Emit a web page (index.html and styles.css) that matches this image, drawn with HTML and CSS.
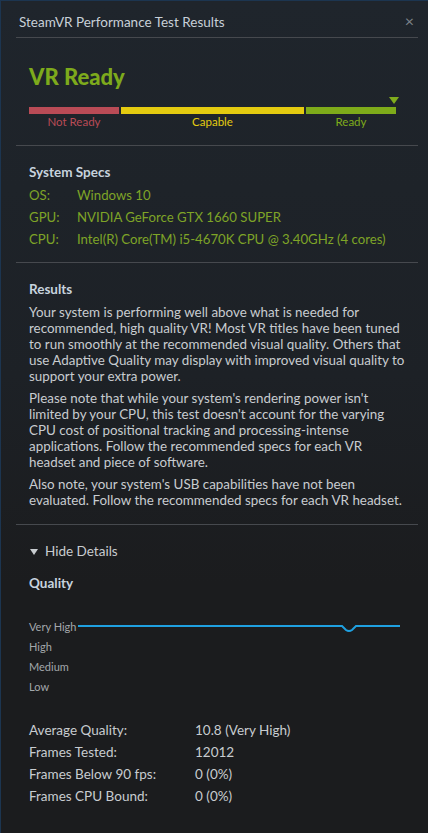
FILE: index.html
```html
<!DOCTYPE html>
<html>
<head>
<meta charset="utf-8">
<link rel="stylesheet" href="styles.css">
</head>
<body>
<div class="window">
  <div class="titlebar">
    <span class="title">SteamVR Performance Test Results</span>
    <span class="close">×</span>
  </div>
  <div class="content">
    <section class="status">
      <h1 class="verdict">VR Ready</h1>
      <div class="meter">
        <div class="marker-row"><span class="marker"></span></div>
        <div class="bars">
          <div class="seg seg-red"><div class="bar"></div><span>Not Ready</span></div>
          <div class="seg seg-yellow"><div class="bar"></div><span>Capable</span></div>
          <div class="seg seg-green"><div class="bar"></div><span>Ready</span></div>
        </div>
      </div>
    </section>
    <section class="specs">
      <h2>System Specs</h2>
      <div class="spec-row"><span class="k">OS:</span><span>Windows 10</span></div>
      <div class="spec-row"><span class="k">GPU:</span><span>NVIDIA GeForce GTX 1660 SUPER</span></div>
      <div class="spec-row"><span class="k">CPU:</span><span>Intel(R) Core(TM) i5-4670K CPU @ 3.40GHz (4 cores)</span></div>
    </section>
    <section class="results">
      <h2>Results</h2>
      <p>Your system is performing well above what is needed for<br>recommended, high quality VR! Most VR titles have been tuned<br>to run smoothly at the recommended visual quality. Others that<br>use Adaptive Quality may display with improved visual quality to<br>support your extra power.</p>
      <p>Please note that while your system's rendering power isn't<br>limited by your CPU, this test doesn't account for the varying<br>CPU cost of positional tracking and processing-intense<br>applications. Follow the recommended specs for each VR<br>headset and piece of software.</p>
      <p>Also note, your system's USB capabilities have not been<br>evaluated. Follow the recommended specs for each VR headset.</p>
    </section>
    <section class="details">
      <div class="toggle"><span class="tri"></span>Hide Details</div>
      <h2 class="q-title">Quality</h2>
      <div class="chart">
        <div class="levels">
          <span>Very High</span>
          <span>High</span>
          <span>Medium</span>
          <span>Low</span>
        </div>
        <svg class="graph" width="322" height="20" viewBox="0 0 322 20">
          <path d="M0 7 H264 L268 11 Q271 13 274 11 L278 7 H322" fill="none" stroke="#1fa0e0" stroke-width="2"/>
        </svg>
      </div>
      <div class="stats">
        <div class="stat"><span class="sk">Average Quality:</span><span>10.8 (Very High)</span></div>
        <div class="stat"><span class="sk">Frames Tested:</span><span>12012</span></div>
        <div class="stat"><span class="sk">Frames Below 90 fps:</span><span>0 (0%)</span></div>
        <div class="stat"><span class="sk">Frames CPU Bound:</span><span>0 (0%)</span></div>
      </div>
    </section>
  </div>
</div>
</body>
</html>
```
FILE: styles.css
```css
* { box-sizing: border-box; }
html, body { margin: 0; padding: 0; }
body {
  width: 428px;
  height: 833px;
  background: #1b1c1e;
  font-family: "Lato", "Noto Sans", sans-serif;
  overflow: hidden;
}
.window {
  width: 428px;
  height: 833px;
  border-top: 1px solid #1c3550;
  border-left: 1px solid #1c3550;
  background: linear-gradient(to bottom, #1f252c 0%, #1d2126 45%, #1b1c1e 70%, #1b1c1e 100%);
  padding: 0 10px 0 15px;
}
.titlebar {
  height: 37px;
  border-bottom: 1px solid #46494e;
  display: flex;
  align-items: center;
  justify-content: space-between;
  padding: 0 4px 0 3px;
}
.title {
  color: #c8d0d8;
  font-size: 13.5px;
  margin-top: 6px;
}
.close {
  color: #7c8288;
  font-size: 16px;
  margin-top: 2px;
}
section {
  padding: 0 13px;
  border-bottom: 1px solid #46494e;
}
.status { padding-top: 24px; padding-bottom: 16px; }
.verdict {
  margin: 0;
  font-size: 22px;
  font-weight: 900;
  color: #7daa1c;
  line-height: 30px;
}
.meter { margin-top: 3px; }
.marker-row { display: flex; justify-content: flex-end; width: 370px; height: 12px; }
.marker {
  width: 0; height: 0;
  border-left: 5.5px solid transparent;
  border-right: 5.5px solid transparent;
  border-top: 7px solid #80ac1d;
  margin-top: 2px;
}
.bars { display: flex; gap: 2px; }
.seg { display: flex; flex-direction: column; align-items: center; }
.seg .bar { height: 7px; width: 100%; }
.seg span { font-size: 11.5px; line-height: 14px; margin-top: 1px; }
.seg-red { width: 90px; }
.seg-red .bar { background: #b94b56; }
.seg-red span { color: #b94b56; }
.seg-yellow { width: 183px; }
.seg-yellow .bar { background: #e4cb10; }
.seg-yellow span { color: #e4cb10; }
.seg-green { width: 90px; }
.seg-green .bar { background: #7eab1a; }
.seg-green span { color: #7eab1a; }

h2 {
  margin: 0;
  font-size: 13.5px;
  font-weight: 700;
  color: #c7d3de;
  line-height: 20px;
}
.specs { padding-top: 16px; padding-bottom: 12px; }
.specs h2 { margin-bottom: 2px; }
.spec-row {
  display: flex;
  color: #7ea427;
  font-size: 13.2px;
  line-height: 22px;
}
.spec-row .k { width: 48px; }
.results { padding-top: 16px; padding-bottom: 10px; }
.results h2 { margin-bottom: 5px; }
.results p {
  margin: 0 0 6px 0;
  color: #c8ccd0;
  font-size: 13.4px;
  line-height: 16px;
  white-space: nowrap;
}
.details { border-bottom: none; padding-top: 17px; }
.toggle {
  color: #c8ccd0;
  font-size: 13.5px;
  line-height: 18px;
  display: flex;
  align-items: center;
}
.tri {
  width: 0; height: 0;
  border-left: 4px solid transparent;
  border-right: 4px solid transparent;
  border-top: 6px solid #c8ccd0;
  margin: 1px 7px 0 1px;
}
.q-title { margin-top: 13px; }
.chart {
  margin-top: 24px;
  display: flex;
  align-items: flex-start;
}
.levels {
  display: flex;
  flex-direction: column;
  width: 49px;
  white-space: nowrap;
}
.levels span {
  font-size: 11px;
  line-height: 20px;
  color: #a3a7ab;
}
.graph { margin-top: 2px; }
.stats { margin-top: 22px; }
.stat {
  display: flex;
  color: #c8ccd0;
  font-size: 13.5px;
  line-height: 22px;
}
.stat .sk { width: 166px; }
```
